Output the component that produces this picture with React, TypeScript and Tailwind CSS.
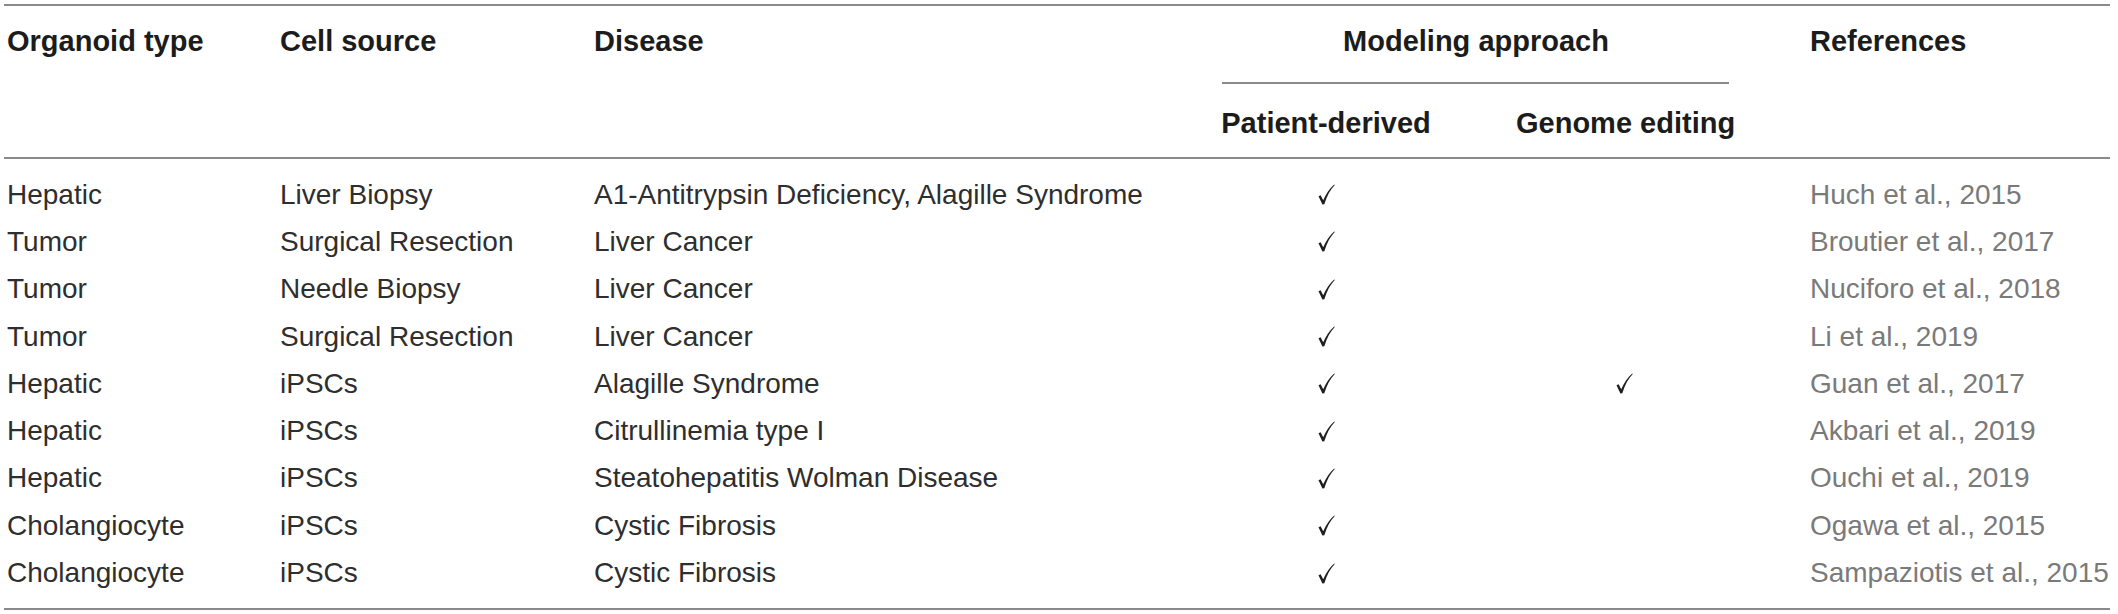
import React from 'react';

type Row = {
  organoid: string;
  source: string;
  disease: string;
  patient: boolean;
  genome: boolean;
  reference: string;
};

const rows: Row[] = [
  { organoid: 'Hepatic', source: 'Liver Biopsy', disease: 'A1-Antitrypsin Deficiency, Alagille Syndrome', patient: true, genome: false, reference: 'Huch et al., 2015' },
  { organoid: 'Tumor', source: 'Surgical Resection', disease: 'Liver Cancer', patient: true, genome: false, reference: 'Broutier et al., 2017' },
  { organoid: 'Tumor', source: 'Needle Biopsy', disease: 'Liver Cancer', patient: true, genome: false, reference: 'Nuciforo et al., 2018' },
  { organoid: 'Tumor', source: 'Surgical Resection', disease: 'Liver Cancer', patient: true, genome: false, reference: 'Li et al., 2019' },
  { organoid: 'Hepatic', source: 'iPSCs', disease: 'Alagille Syndrome', patient: true, genome: true, reference: 'Guan et al., 2017' },
  { organoid: 'Hepatic', source: 'iPSCs', disease: 'Citrullinemia type I', patient: true, genome: false, reference: 'Akbari et al., 2019' },
  { organoid: 'Hepatic', source: 'iPSCs', disease: 'Steatohepatitis Wolman Disease', patient: true, genome: false, reference: 'Ouchi et al., 2019' },
  { organoid: 'Cholangiocyte', source: 'iPSCs', disease: 'Cystic Fibrosis', patient: true, genome: false, reference: 'Ogawa et al., 2015' },
  { organoid: 'Cholangiocyte', source: 'iPSCs', disease: 'Cystic Fibrosis', patient: true, genome: false, reference: 'Sampaziotis et al., 2015' },
];

function Check() {
  return (
    <svg width="17" height="21" viewBox="0 0 17 21" className="inline-block">
      <path
        d="M0.5 12.2 L2.6 11.2 L5.2 16.2 C8 10 11.6 4.4 16.2 0.4 L16.8 1.1 C12.4 5.6 9 11.8 6.3 20.2 L4.4 20.4 Z"
        fill="#1f1f1f"
      />
    </svg>
  );
}

export default function App() {
  return (
    <div className="w-[2118px] h-[614px] bg-white font-['Liberation_Sans',Arial,sans-serif] text-[28px] leading-[32px]">
      <div className="ml-[4px] w-[2106px] pt-[4px]">
        <div className="h-[2px] bg-[#8a8a8a]" />

        {/* header */}
        <div className="flex pt-[19px] pb-[18px] text-[29px] font-bold text-[#1c1c1c]">
          <div className="w-[276px] pl-[3px]">Organoid type</div>
          <div className="w-[314px]">Cell source</div>
          <div className="w-[626px]">Disease</div>
          <div className="w-[512px] flex flex-col">
            <div className="text-center">Modeling approach</div>
            <div className="mt-[25px] ml-[2px] mr-[3px] h-[2px] bg-[#8a8a8a]" />
            <div className="mt-[23px] flex justify-between">
              <div className="w-[212px] text-center whitespace-nowrap">Patient-derived</div>
              <div className="w-[216px] text-center whitespace-nowrap">Genome editing</div>
            </div>
          </div>
          <div className="pl-[78px]">References</div>
        </div>
        <div className="h-[2px] bg-[#8a8a8a]" />

        {/* body */}
        <div className="pt-[12px] pb-[11px]">
          {rows.map((r, i) => (
            <div key={i} className="flex h-[47.3px] items-center text-[#2e2e2e]">
              <div className="w-[276px] pl-[3px]">{r.organoid}</div>
              <div className="w-[314px]">{r.source}</div>
              <div className="w-[626px]">{r.disease}</div>
              <div className="w-[212px] flex justify-center">{r.patient && <Check />}</div>
              <div className="w-[84px]" />
              <div className="w-[216px] flex justify-center">{r.genome && <Check />}</div>
              <div className="pl-[78px] text-[#7a7a7a] whitespace-nowrap">{r.reference}</div>
            </div>
          ))}
        </div>
        <div className="h-[2px] bg-[#8a8a8a]" />
      </div>
    </div>
  );
}
